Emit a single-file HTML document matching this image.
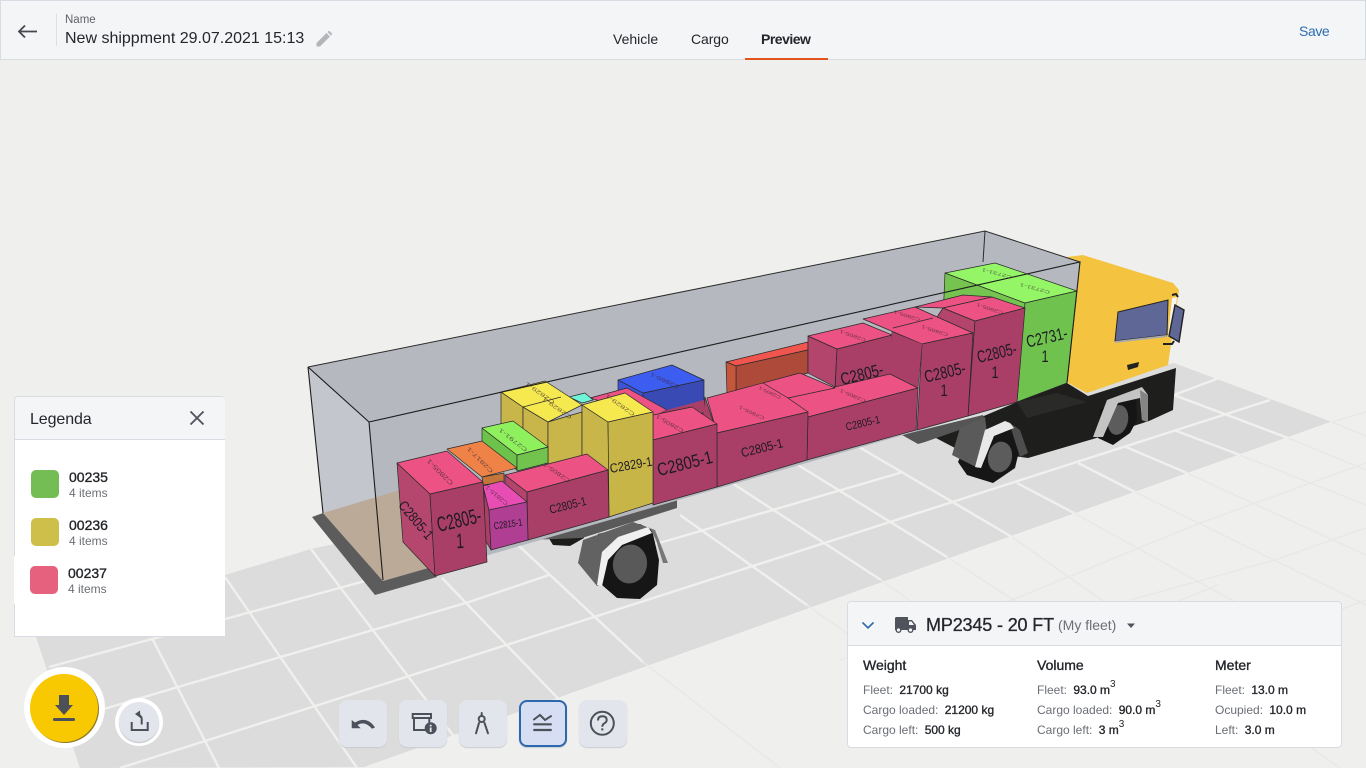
<!DOCTYPE html>
<html lang="en"><head><meta charset="utf-8"><title>Preview</title>
<style>
html,body{margin:0;padding:0;width:1366px;height:768px;overflow:hidden;background:#efefee;font-family:"Liberation Sans",sans-serif;color:#24262b}
svg{position:absolute;left:0;top:0}
.a{position:absolute;white-space:nowrap}
.m{-webkit-text-stroke:.35px currentColor}
.g{color:#6b6e76}
.v{color:#24262b;-webkit-text-stroke:.35px #24262b;margin-left:3px}
sup{font-size:10px;line-height:0;position:relative;top:-2px;vertical-align:super;-webkit-text-stroke:0;font-weight:400}
.btn{position:absolute;top:700px;width:48px;height:47px;border-radius:8px;background:#e3e5ec;box-shadow:0 1px 1px #c8cad2;box-sizing:border-box}
.row{font-size:12px;line-height:14px}
.lb text{font-family:"Liberation Sans",sans-serif;fill:#1d1a22;text-anchor:middle;dominant-baseline:central}
.tp text{font-family:"Liberation Sans",sans-serif;fill:#3a2a33;font-size:9px;text-anchor:middle;dominant-baseline:central;opacity:.7}
</style></head><body>
<svg width="1366" height="768" viewBox="0 0 1366 768">
<!-- floor -->
<polygon points="20,588 225,575 311,549 1174,363 1332,422 366,767 80,768 36,637" fill="#dcdcdc"/>
<g stroke="#e8e8e7" stroke-width="1.5" fill="none">
<path d="M807,605L960,714M881,580L1090,730M947,557L1200,720M1012,537L1340,768M1074,513L1340,660M1135,492L1366,605M1187,473L1366,555M1240,455L1366,505M1288,438L1366,470M1332,422L1366,436"/>
<path d="M643,662L780,768M553,693L625,768"/>
<path d="M1012,600L1200,523L1366,463M1130,600L1275,560L1366,528M1332,422L1366,412M840,660L1012,600M1218,585L1120,625M1340,610L1366,600"/>
</g>
<g stroke="#f0f0ef" stroke-width="2.4" fill="none">
<path d="M152,638L219,768M225,577L357,768M311,549L478,768M442,578L625,768M518,545L643,662M680,515L807,605M732,483L881,580M798,465L947,557M859,447L1012,537M1017,483L1074,513M1078,463L1135,492M1126,447L1187,473M1174,430L1240,455M1174,395L1288,438"/>
<path d="M49,667L442,560M60,722L178,687L469,602L549,575M120,768L312,707L594,617L1270,400M600,560L680,537L903,472M1174,395L1219,378"/>
<path d="M366,767L1332,422" stroke-width="1.2"/>
</g>

<!-- rear wheel behind -->
<polygon points="545,532 583,522 584,538 570,546 553,545" fill="#1c1c1b"/>
<polygon points="527,540 677,500 677,508 582,538" fill="#5a5a5a"/>

<!-- right cab -->
<polygon points="1067,257 1083,255 1173,283 1179,290 1178,297 1168,365 1087,393 1068,383" fill="#f4c440"/>
<polygon points="1118,312 1168,300 1167,335 1115,341" fill="#5e6796" stroke="#222" stroke-width="1"/>
<polygon points="1115,341 1167,335 1167,337 1115,343" fill="#aaa"/>
<polygon points="1172,298 1177,297 1172,337 1168,336" fill="#f4f4f4"/>
<polygon points="1175,305 1184,310 1179,342 1169,336" fill="#5e6796" stroke="#222" stroke-width="1.4"/>
<path d="M1172,295l4,-1l2,3M1163,344l9,0l2,-3" stroke="#222" stroke-width="2" fill="none"/>
<polygon points="1127,365 1139,362 1138,367 1128,370" fill="#222"/>
<!-- chassis -->
<polygon points="934,437 1017,402 1067,383 1088,396 1176,368 1173,410 1149,421 1093,439 1028,458 955,448" fill="#1e1e1c"/>
<polygon points="1017,402 1057,393 1087,402 1027,418" fill="#2a2a29"/>
<polygon points="902,435 983,415 985,421 925,442 918,444" fill="#555"/>
<!-- right rear wheel -->
<polygon points="1098,438 1113,445 1130,433 1137,420 1136,400 1120,395 1100,410" fill="#151515"/>
<ellipse cx="1118" cy="420" rx="10" ry="15" transform="rotate(12 1118 420)" fill="#5c5c5c"/>
<polygon points="1093,437 1107,400 1142,387 1148,395 1148,422 1142,420 1140,398 1118,403 1103,437" fill="#c4c4c4"/>
<polygon points="1140,390 1148,395 1148,422 1142,420" fill="#858585"/>
<!-- right front wheel -->
<polygon points="958,462 967,475 993,483 1015,468 1020,447 1010,430 985,430 965,445" fill="#161616"/>
<ellipse cx="1000" cy="457" rx="12" ry="15.5" transform="rotate(12 1000 457)" fill="#5c5c5c"/>
<polygon points="952,455 960,428 985,417 987,433 978,468" fill="#5a5a5a"/>
<polygon points="1010,423 1020,430 1028,453 1020,457 1013,435" fill="#4e4e4e"/>
<polygon points="975,467 985,430 1005,421 1010,423 1014,428 994,436 981,468" fill="#e8e8e8"/>

<!-- glass box back -->
<polygon points="308,367 985,231 1080,262 1067,383 1017,402 437,570 323,513" fill="#b5b8bf"/>
<polygon points="308,367 369,422 383,580 323,513" fill="#c3c6cd"/>
<polygon points="323,513 400,490 440,565 383,581" fill="#bcaa98"/>
<polygon points="312,517 323,513 383,581 432,567 437,577 375,595" fill="#5c5c5c"/>
<path d="M308,367L985,231L1080,262M985,231L983,262" stroke="#2b2b2b" stroke-width="1" fill="none"/>
<path d="M308,367L369,422M308,367L323,513" stroke="#1c1c1c" stroke-width="1.1" fill="none"/>

<!-- boxes, far to near -->
<g stroke="#2a2a2a" stroke-width=".7" stroke-linejoin="round">
<!-- green -->
<polygon points="945,273 1025,303 1020,400 943,320" fill="#74c44f"/>
<polygon points="945,273 995,263 1077,291 1025,303" fill="#94f566"/>
<polygon points="1025,303 1077,291 1067,383 1017,402" fill="#6fc24d"/>
<!-- pink stack right -->
<polygon points="915,307 963,295 992,297 943,308" fill="#ec5283"/>
<polygon points="943,308 975,321 968,416 930,400 935,320" fill="#b3456c"/>
<polygon points="943,308 992,297 1025,308 975,321" fill="#ec5283"/>
<polygon points="975,321 1025,308 1017,402 968,416" fill="#a93f66"/>
<!-- red -->
<polygon points="726,362 808,342 808,350 736,366" fill="#f0564d"/>
<polygon points="736,366 808,350 808,373 736,392" fill="#ad4a3a"/>
<polygon points="726,362 736,366 736,392 727,394" fill="#c5563c"/>
<!-- pink 4 -->
<polygon points="892,332 922,344 918,388 890,377" fill="#b3456c"/>
<polygon points="863,319 915,307 973,333 922,344" fill="#ec5283"/>
<polygon points="922,344 973,333 968,416 917,430" fill="#a93f66"/>
<!-- pink 3 -->
<polygon points="808,336 837,349 835,387 808,373" fill="#b3456c"/>
<polygon points="837,349 892,335 892,377 835,392" fill="#a93f66"/>
<polygon points="808,336 863,323 892,335 837,349" fill="#ec5283"/>
<polygon points="892,332 922,344 918,388 890,377" fill="#a93f66" stroke="none"/>
<!-- long pink -->
<polygon points="788,398 890,374 918,388 808,417" fill="#ec5283"/>
<polygon points="808,417 918,388 916,430 807,460" fill="#a93f66"/>
<!-- blue -->
<polygon points="618,380 643,393 643,412 618,398" fill="#3d54d8"/>
<polygon points="643,393 704,380 704,413 643,420" fill="#3a4ab5"/>
<polygon points="618,380 672,365 704,380 643,393" fill="#3d5cf0"/>
<!-- pink next -->
<polygon points="705,397 717,433 717,440 702,420" fill="#a93f66"/>
<polygon points="707,398 800,373 835,388 788,398 808,412 717,433" fill="#ec5283"/>
<polygon points="717,433 808,412 807,460 717,487" fill="#a93f66"/>
<!-- pink behind yellow -->
<polygon points="590,398 627,388 667,410 653,417" fill="#ec5283"/>
<polygon points="667,410 653,417 653,425 704,412 704,400" fill="#a93f66" stroke="none"/>
<!-- big C2805 -->
<polygon points="653,415 692,407 717,424 653,440" fill="#ec5283"/>
<polygon points="653,440 717,424 717,487 653,505" fill="#a93f66"/>
<!-- cyan & yellow -->
<polygon points="569,397 585,393 593,400 582,403" fill="#6ff5d8"/>
<polygon points="501,392 523,407 523,440 501,425" fill="#c9b64a"/>
<polygon points="523,407 548,422 548,455 523,433" fill="#c9b64a"/>
<polygon points="548,422 582,412 582,460 548,465" fill="#c9b64a"/>
<polygon points="501,392 545,381 582,405 548,422 523,407" fill="#f6e94f"/>
<polygon points="582,405 608,422 609,475 582,457" fill="#c9b64a"/>
<polygon points="582,405 625,393 653,412 608,422" fill="#f6e94f"/>
<polygon points="608,422 653,412 653,503 609,517" fill="#c8b548"/>
<!-- green small -->
<polygon points="482,428 517,455 517,470 482,445" fill="#6cc24a"/>
<polygon points="517,455 548,447 548,463 517,471" fill="#72c24e"/>
<polygon points="482,428 513,421 548,447 517,455" fill="#8ff05e"/>
<!-- orange -->
<polygon points="482,477 504,473 504,482 483,485" fill="#c4753a"/>
<polygon points="447,449 482,441 517,468 482,477" fill="#ef8347"/>
<!-- pink mid -->
<polygon points="505,475 527,492 527,505 505,485" fill="#b3456c"/>
<polygon points="505,475 587,454 608,470 527,492" fill="#ec5283"/>
<polygon points="527,492 608,470 609,517 528,540" fill="#a93f66"/>
<!-- magenta -->
<polygon points="484,490 489,510 491,550 485,540" fill="#a93f66"/>
<polygon points="483,486 502,481 527,502 489,510" fill="#e84db4"/>
<polygon points="489,510 527,502 528,540 491,550" fill="#b03e92"/>
<!-- big near -->
<polygon points="397,463 430,494 435,576 403,542" fill="#b5476f"/>
<polygon points="397,463 447,451 483,482 430,494" fill="#ec5283"/>
<polygon points="430,494 483,482 487,562 435,576" fill="#a93f66"/>
<!-- top seams -->
<path d="M523,407L561,397M548,422L523,407M893,328L933,318M763,383L788,398" fill="none"/>
</g>

<!-- near glass lines -->
<path d="M369,422L1080,262L1067,383M369,422L383,580" stroke="#1c1c1c" stroke-width="1.1" fill="none"/>

<!-- front fender -->
<polygon points="598,534 640,524 652,530 659,560 657,585 640,599 617,598 602,585" fill="#161616"/>
<ellipse cx="630" cy="564" rx="17" ry="19.500" transform="rotate(10 630 564)" fill="#595959"/>
<polygon points="578,563 583,540 633,522 650,528 620,540 607,555 600,585 597,586" fill="#626262"/>
<polygon points="650,528 655,530 668,563 663,563 656,540" fill="#777"/>
<polygon points="597,585 602,552 618,537 648,527 652,533 622,545 608,560 602,586" fill="#f0f0f0"/>

<!-- front labels -->
<g class="lb">
<text font-size="21" transform="translate(459,520) rotate(-13) scale(.65,1)">C2805-</text>
<text font-size="21" transform="translate(460,541) rotate(-3) scale(.65,1)">1</text>
<text font-size="14" transform="translate(416,520) rotate(50) scale(.85,1)">C2805-1</text>
<text font-size="10" transform="translate(508,524) rotate(-8) scale(.75,1)">C2815-1</text>
<text font-size="12" transform="translate(568,506) rotate(-14) scale(.82,1)">C2805-1</text>
<text font-size="13" transform="translate(631,465) rotate(-10) scale(.86,1)">C2829-1</text>
<text font-size="18" transform="translate(685,464) rotate(-14) scale(.82,1)">C2805-1</text>
<text font-size="13" transform="translate(762,448) rotate(-14) scale(.86,1)">C2805-1</text>
<text font-size="11" transform="translate(863,424) rotate(-13) scale(.83,1)">C2805-1</text>
<text font-size="17" transform="translate(862,375) rotate(-14) scale(.78,1)">C2805-</text>
<text font-size="17" transform="translate(945,373) rotate(-13) scale(.75,1)">C2805-</text>
<text font-size="17" transform="translate(944,391) scale(.75,1)">1</text>
<text font-size="17" transform="translate(997,354) rotate(-13) scale(.72,1)">C2805-</text>
<text font-size="17" transform="translate(995,373) scale(.75,1)">1</text>
<text font-size="17" transform="translate(1047,338) rotate(-13) scale(.75,1)">C2731-</text>
<text font-size="17" transform="translate(1045,357) scale(.75,1)">1</text>
</g>
<!-- top labels -->
<g class="tp">
<text transform="translate(440,472) rotate(225) scale(1,.7)">C2805-1</text>
<text transform="translate(480,460) rotate(225) scale(1,.6)">C2817-1</text>
<text transform="translate(513,440) rotate(218) scale(1,.6)">C2791-1</text>
<text transform="translate(620,405) rotate(215) scale(1,.6)">C2829-1</text>
<text transform="translate(557,408) rotate(215) scale(1,.6)">C2829-1</text>
<text transform="translate(540,393) rotate(215) scale(1,.6)">C2829-1</text>
<text transform="translate(557,472) rotate(215) scale(.9,.6)">C2805-1</text>
<text transform="translate(497,495) rotate(220) scale(.8,.6)">C2815-1</text>
<text transform="translate(665,380) rotate(205) scale(.9,.6)">C2860-1</text>
<text transform="translate(670,423) rotate(210) scale(.9,.6)">C2805-1</text>
<text transform="translate(752,412) rotate(205) scale(.8,.5)">C2805-1</text>
<text transform="translate(770,392) rotate(205) scale(.7,.5)">C2805-1</text>
<text transform="translate(853,395) rotate(203) scale(.8,.5)">C2805-1</text>
<text transform="translate(853,335) rotate(200) scale(.8,.5)">C2805-1</text>
<text transform="translate(907,315) rotate(198) scale(.8,.5)">C2805-1</text>
<text transform="translate(935,330) rotate(198) scale(.8,.5)">C2805-1</text>
<text transform="translate(990,308) rotate(198) scale(.8,.5)">C2805-1</text>
<text transform="translate(1035,288) rotate(195) scale(.9,.5)">C2731-1</text>
<text transform="translate(997,273) rotate(195) scale(.9,.5)">C2731-1</text>
</g>
</svg>

<!-- header -->
<div class="a" style="left:0;top:0;width:1366px;height:60px;background:#f4f5f7;border:1px solid #d9dbe2;box-sizing:border-box"></div>
<svg width="40" height="30" style="left:14px;top:17px" viewBox="0 0 40 30"><path d="M5,14.5H23M11,8.5L5,14.5L11,20.5" fill="none" stroke="#454850" stroke-width="1.8"/></svg>
<div class="a" style="left:56px;top:14px;width:1px;height:32px;background:#dddfe4"></div>
<div class="a" style="left:65px;top:13px;font-size:11.5px;line-height:14px;color:#5f626a">Name</div>
<div class="a" style="left:65px;top:29px;font-size:16px;line-height:20px">New shippment 29.07.2021 15:13</div>
<svg width="20" height="20" style="left:314px;top:29px" viewBox="0 0 20 20"><path d="M2.5,17.5V14L12.5,4L16,7.5L6,17.5ZM13.5,3L15,1.6L18.4,5L17,6.5Z" fill="#b4b5b8"/></svg>
<div class="a" style="left:613px;top:31px;font-size:14px;line-height:17px">Vehicle</div>
<div class="a" style="left:691px;top:31px;font-size:14px;line-height:17px;letter-spacing:-.1px">Cargo</div>
<div class="a" style="left:761px;top:31px;font-size:14px;line-height:17px;font-weight:700;letter-spacing:-.5px">Preview</div>
<div class="a" style="left:745px;top:58px;width:83px;height:2px;background:#e2531f"></div>
<div class="a" style="left:1299px;top:23px;font-size:14px;line-height:17px;color:#2c6cb0;letter-spacing:-.4px">Save</div>

<!-- legend -->
<div class="a" style="left:14px;top:396px;width:211px;height:241px;background:#fff;border:1px solid #d9dbe2;box-sizing:border-box;border-radius:4px 4px 0 0;border-right:0"></div>
<div class="a" style="left:15px;top:397px;width:210px;height:42px;background:#f4f5f7;border-bottom:1px solid #d9dbe2;border-radius:4px 4px 0 0"></div>
<div class="a" style="left:30px;top:410px;font-size:16px;line-height:20px;letter-spacing:-.1px">Legenda</div>
<svg width="20" height="20" style="left:187px;top:408px" viewBox="0 0 20 20"><path d="M3.5,3.5L16.5,16.5M16.5,3.5L3.5,16.5" stroke="#50535c" stroke-width="1.9"/></svg>
<div class="a" style="left:31px;top:470px;width:28px;height:28px;border-radius:5px;background:#74bd54"></div>
<div class="a m" style="left:69px;top:469px;font-size:14px;line-height:16px">00235</div>
<div class="a g" style="left:69px;top:486px;font-size:12px;line-height:14px">4 items</div>
<div class="a" style="left:31px;top:518px;width:28px;height:28px;border-radius:5px;background:#cebf4b"></div>
<div class="a m" style="left:69px;top:517px;font-size:14px;line-height:16px">00236</div>
<div class="a g" style="left:69px;top:534px;font-size:12px;line-height:14px">4 items</div>
<div class="a" style="left:14px;top:556px;width:40px;height:48px;background:#fff"></div>
<div class="a" style="left:30px;top:566px;width:28px;height:28px;border-radius:5px;background:#e6617d"></div>
<div class="a m" style="left:68px;top:565px;font-size:14px;line-height:16px">00237</div>
<div class="a g" style="left:68px;top:582px;font-size:12px;line-height:14px">4 items</div>

<!-- vehicle panel -->
<div class="a" style="left:847px;top:601px;width:495px;height:147px;background:#fff;border:1px solid #d9dbe2;box-sizing:border-box;border-radius:4px"></div>
<div class="a" style="left:848px;top:602px;width:493px;height:43px;background:#f4f5f7;border-bottom:1px solid #d9dbe2;border-radius:4px 4px 0 0"></div>
<svg width="16" height="12" style="left:860px;top:619px" viewBox="0 0 16 12"><path d="M2.5,3.5L8,8.8L13.5,3.5" fill="none" stroke="#2c6cb0" stroke-width="1.7"/></svg>
<svg width="24" height="18" style="left:893px;top:616px" viewBox="0 0 24 18"><path d="M2,2.5Q2,1 3.5,1H15V4H19L23,9V14H20.5A3,3 0 0 1 14.5,14H8.5A3,3 0 0 1 2.5,14H2Z" fill="#50535c"/><circle cx="5.5" cy="14" r="1.6" fill="#f4f5f7"/><circle cx="17.5" cy="14" r="1.6" fill="#f4f5f7"/><path d="M16,5.5H18.6L21,9H16Z" fill="#f4f5f7"/></svg>
<div class="a" style="left:926px;top:615px;font-size:18px;line-height:21px;-webkit-text-stroke:.3px #24262b;letter-spacing:-.15px">MP2345 - 20 FT</div>
<div class="a g" style="left:1058px;top:617px;font-size:14px;line-height:17px">(My fleet)</div>
<svg width="10" height="6" style="left:1126px;top:623px" viewBox="0 0 10 6"><path d="M1,0.5H9L5,5Z" fill="#50535c"/></svg>

<div class="a m" style="left:863px;top:657px;font-size:14px;line-height:17px">Weight</div>
<div class="a row g" style="left:863px;top:683px">Fleet: <span class="v">21700 kg</span></div>
<div class="a row g" style="left:863px;top:703px">Cargo loaded: <span class="v">21200 kg</span></div>
<div class="a row g" style="left:863px;top:723px">Cargo left: <span class="v">500 kg</span></div>

<div class="a m" style="left:1037px;top:657px;font-size:14px;line-height:17px">Volume</div>
<div class="a row g" style="left:1037px;top:683px">Fleet: <span class="v">93.0 m<sup>3</sup></span></div>
<div class="a row g" style="left:1037px;top:703px">Cargo loaded: <span class="v">90.0 m<sup>3</sup></span></div>
<div class="a row g" style="left:1037px;top:723px">Cargo left: <span class="v">3 m<sup>3</sup></span></div>

<div class="a m" style="left:1215px;top:657px;font-size:14px;line-height:17px">Meter</div>
<div class="a row g" style="left:1215px;top:683px">Fleet: <span class="v">13.0 m</span></div>
<div class="a row g" style="left:1215px;top:703px">Ocupied: <span class="v">10.0 m</span></div>
<div class="a row g" style="left:1215px;top:723px">Left: <span class="v">3.0 m</span></div>

<!-- action buttons -->
<div class="a" style="left:24px;top:667px;width:81px;height:81px;border-radius:50%;background:#fff"></div>
<div class="a" style="left:30px;top:674px;width:68px;height:68px;border-radius:50%;background:#f8c800;box-shadow:1px 1px 0 #8d7a22"></div>
<svg width="30" height="34" style="left:50px;top:691px" viewBox="0 0 30 34"><path d="M9,4H19V14H23L14,24L5,14H9Z" fill="#4c505a"/><rect x="3" y="27" width="22" height="3" rx="1.5" fill="#4c505a"/></svg>
<div class="a" style="left:115px;top:698px;width:48px;height:48px;border-radius:50%;background:#fff"></div>
<div class="a" style="left:119px;top:702px;width:40px;height:40px;border-radius:50%;background:#e3e5ec;box-shadow:0 1px 1px #b9bbc3"></div>
<svg width="24" height="26" style="left:128px;top:709px" viewBox="0 0 24 26"><path d="M3.700,13V21H19.700V13" fill="none" stroke="#4c505a" stroke-width="2"/><path d="M13.700,15.500V10Q13.700,7 10,5.500" fill="none" stroke="#4c505a" stroke-width="2"/><path d="M7,5L12,1.500L12.500,9Z" fill="#4c505a"/></svg>

<div class="btn" style="left:339px"><svg width="48" height="47" viewBox="0 0 48 47" style="position:absolute"><path d="M12.700,20V28.300H21.700L18.500,25Q26,20.500 33,28.800L36,27.500Q28,15.500 16,22.500Z" fill="#4c505a"/></svg></div>
<div class="btn" style="left:399px"><svg width="48" height="47" viewBox="0 0 48 47" style="position:absolute"><path d="M13.700,14H32V18H13.700ZM15,18V30H27M30.300,18V23" fill="none" stroke="#4c505a" stroke-width="2"/><circle cx="31.700" cy="28.300" r="6" fill="#4c505a"/><rect x="30.800" y="27.500" width="1.800" height="4.500" fill="#e3e5ec"/><rect x="30.800" y="24.700" width="1.800" height="1.800" fill="#e3e5ec"/></svg></div>
<div class="btn" style="left:459px"><svg width="48" height="47" viewBox="0 0 48 47" style="position:absolute"><path d="M22.700,13V16M20,23L17,33.300M25.500,23L29,33.300" fill="none" stroke="#4c505a" stroke-width="2" stroke-linecap="round"/><circle cx="22.700" cy="19" r="3" fill="none" stroke="#4c505a" stroke-width="2"/></svg></div>
<div class="btn" style="left:519px;background:#d6def3;border:2px solid #2b68ad"><svg width="44" height="43" viewBox="0 0 44 43" style="position:absolute"><path d="M12.300,18L19,13L24,18L30.700,13.700" fill="none" stroke="#4c505a" stroke-width="2"/><path d="M12.300,22.300H30.700M12.300,28H30.700" stroke="#4c505a" stroke-width="2.200"/></svg></div>
<div class="btn" style="left:579px"><svg width="48" height="47" viewBox="0 0 48 47" style="position:absolute"><circle cx="23.300" cy="23.300" r="11.500" fill="none" stroke="#4c505a" stroke-width="2"/><path d="M19,20.500Q19,16.300 23.300,16.300Q27.700,16.300 27.700,20Q27.700,22 25.500,23.200Q23.300,24.400 23.300,26.800" fill="none" stroke="#4c505a" stroke-width="2"/><rect x="22.300" y="28.300" width="2" height="2.200" fill="#4c505a"/></svg></div>
</body></html>
